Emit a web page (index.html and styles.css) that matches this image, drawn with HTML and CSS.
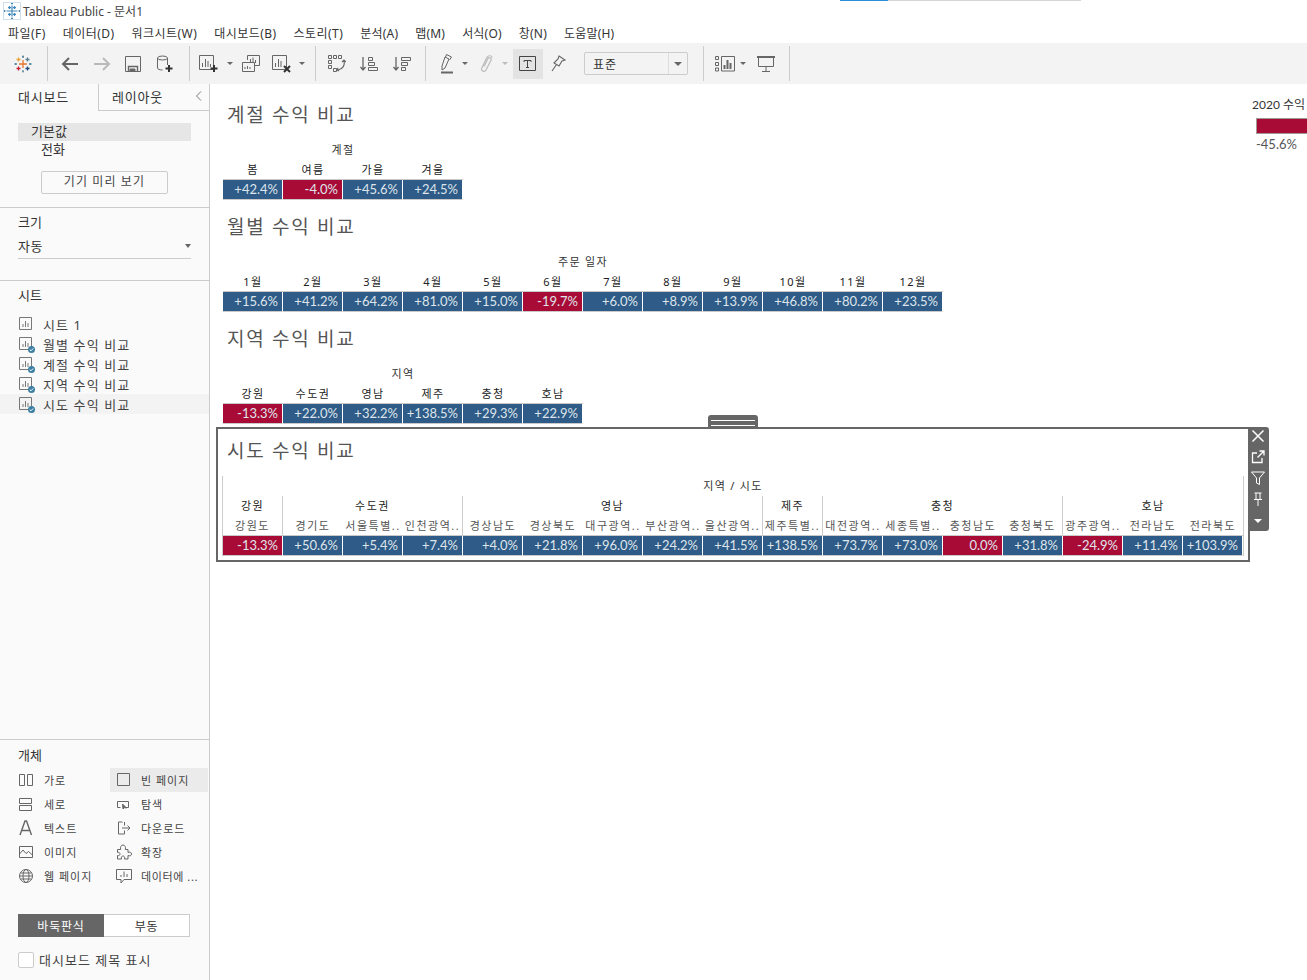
FILE: index.html
```html
<!DOCTYPE html>
<html lang="ko">
<head>
<meta charset="utf-8">
<title>Tableau Public - 문서1</title>
<link rel="stylesheet" href="styles.css">
</head>
<body>
<div class="tabs-edge"><span class="edge-blue"></span><span class="edge-gray"></span></div>
<header class="titlebar">
  <svg class="app-logo" width="18" height="18" viewBox="0 0 18 18" fill="none" stroke="#3f88b8" stroke-width="1.2"><path d="M9 3.5v11M3.5 9h11M5 5.6h3M6.5 4.1v3M10 5.6h3M11.5 4.1v3M5 12.4h3M6.5 10.9v3M10 12.4h3M11.5 10.9v3M9 .5v2M8 1.5h2M9 15.5v2M8 16.5h2M.5 9h2M1.5 8v2M15.5 9h2M16.5 8v2"/><rect x=".5" y=".5" width="17" height="17" stroke="#cfe0ec" stroke-width="1"/></svg>
  <span>Tableau Public - 문서1</span>
</header>
<nav class="menubar">
  <span>파일(F)</span><span>데이터(D)</span><span>워크시트(W)</span><span>대시보드(B)</span><span>스토리(T)</span><span>분석(A)</span><span>맵(M)</span><span>서식(O)</span><span>창(N)</span><span>도움말(H)</span>
</nav>
<div class="toolbar">
  <span class="tb-btn m8"><svg width="18" height="18" viewBox="0 0 18 18" fill="none" stroke-width="1.3"><path d="M9 5v8M5 9h8" stroke="#e8762d"/><path d="M4.5 2.5v4M2.5 4.5h4" stroke="#e8a33d"/><path d="M13.5 2.5v4M11.5 4.5h4" stroke="#5b7f95"/><path d="M4.5 11.5v4M2.5 13.5h4" stroke="#c72037"/><path d="M13.5 11.5v4M11.5 13.5h4" stroke="#1f447b"/><path d="M9 .5v2.4M8 1.7h2" stroke="#5b879b"/><path d="M9 15v2.5M8 16.3h2" stroke="#7099a6"/><path d="M.5 9h2.400M1.700 8v2" stroke="#59879b"/><path d="M15 9h2.500M16.300 8v2" stroke="#59879b"/></svg></span>
  <i class="tb-sep m9"></i>
  <span class="tb-btn m7"><svg width="18" height="16" viewBox="0 0 18 16" fill="none" stroke="#666" stroke-width="2"><path d="M17 8H2M8 2 2 8l6 6"/></svg></span>
  <span class="tb-btn m2"><svg width="18" height="16" viewBox="0 0 18 16" fill="none" stroke="#b9b9b9" stroke-width="2"><path d="M1 8h15M10 2l6 6-6 6"/></svg></span>
  <span class="tb-btn m1"><svg width="16" height="16" viewBox="0 0 16 16" fill="none" stroke="#666" stroke-width="1"><path d="M.5.500h15v15H.5z"/><path d="M3.500 15V10.500h9V15" stroke-width="1.400"/><path d="M5 13h5v2H5z" fill="#666"/></svg></span>
  <span class="tb-btn m2"><svg width="18" height="18" viewBox="0 0 18 18" fill="none" stroke="#666" stroke-width="1"><ellipse cx="6.500" cy="3" rx="5" ry="2"/><path d="M1.500 3v10c0 1.100 2 2 5 2M11.500 3v7"/><path d="M13 10v7M9.500 13.500h7" stroke="#333" stroke-width="2"/></svg></span>
  <i class="tb-sep m9"></i>
  <span class="tb-btn m4"><svg width="20" height="18" viewBox="0 0 20 18" fill="none" stroke="#666"><path d="M.5.500h14v14H.5zM3.500 12V8M6.500 12V4M9 12V6M11.500 12V9" /><path d="M15 10v7M11.500 13.500h7" stroke="#333" stroke-width="2"/></svg></span>
  <span class="tb-caret m2"></span>
  <span class="tb-btn m2"><svg width="18" height="18" viewBox="0 0 18 18" fill="none" stroke="#666"><path d="M5.500 5V.5h12v10h-5M8.500 8V4M11 8V2.500M13.500 8V5"/><path d="M.5 7.500h12v9H.5zM3 14v-2M5.500 14v-3M8 14v-2"/></svg></span>
  <span class="tb-btn m1"><svg width="20" height="18" viewBox="0 0 20 18" fill="none" stroke="#666"><path d="M.5.500h14v14H.5zM3.500 12V8M6.500 12V4M9 12V6"/><path d="m12 11 6 6M18 11l-6 6" stroke="#333" stroke-width="2"/></svg></span>
  <span class="tb-caret m1"></span>
  <i class="tb-sep m9"></i>
  <span class="tb-btn m6"><svg width="18" height="18" viewBox="0 0 18 18" fill="none" stroke="#666"><path d="M.5.500h3v3h-3zM5.500.500h3v3h-3zM10.500.500h3v3h-3zM.5 5.500h3v3h-3zM.5 10.500h3v3h-3zM5.500 13.500h3v3h-3z"/><path d="M16 6c1 4-1 8-6 9M14 7l2-2 2 2M10 13l-1 2 2 1" stroke-width="1.200"/></svg></span>
  <span class="tb-btn m2"><svg width="18" height="16" viewBox="0 0 18 16" fill="none" stroke="#666"><path d="M3 1v13M.5 11 3 14l2.500-3" stroke-width="1.300"/><path d="M8.500 1.500h4v3h-4zM8.500 6.500h6v3h-6zM8.500 11.500h9v3h-9z"/></svg></span>
  <span class="tb-btn m3"><svg width="18" height="16" viewBox="0 0 18 16" fill="none" stroke="#666"><path d="M3 1v13M.5 11 3 14l2.500-3" stroke-width="1.300"/><path d="M8.500 1.500h9v3h-9zM8.500 6.500h6v3h-6zM8.500 11.500h4v3h-4z"/></svg></span>
  <i class="tb-sep m8"></i>
  <span class="tb-btn m6"><svg width="14" height="20" viewBox="0 0 14 20" fill="none" stroke="#666"><path d="m5 3 4 2-4 9-3 2v-4zM5.500 3l1-2.500 5 2.500-2 3"/><path d="M1 18.500h12" stroke-width="2"/></svg></span>
  <span class="tb-caret n1"></span>
  <span class="tb-btn m2"><svg width="14" height="18" viewBox="0 0 14 18" fill="none" stroke="#bbb" stroke-width="1.200"><path d="M5 11.500 9 3.500c.8-1.600 3.800-.6 3.200 1.300L7 15c-1.300 2.500-5.500 1-4.300-1.700L8 2.300c1-2 4.500-2.200 5.300.2"/></svg></span>
  <span class="tb-caret light"></span>
  <span class="tb-btn m4 active"><svg width="18" height="16" viewBox="0 0 18 16" fill="none" stroke="#444"><path d="M.5.500h16v14H.5zM5 4.500h7M8.500 4.500v7M7 11.500h3M5 4.500V6M12 4.500V6"/></svg></span>
  <span class="tb-btn"><svg width="16" height="18" viewBox="0 0 16 18" fill="none" stroke="#666"><path d="m9 1 6 4-3 1-3 5-5-3 4-4zM6.500 9.500 2 16" stroke-width="1.100"/></svg></span>
  <div class="tb-select"><span class="tb-select-text">표준</span><span class="tb-select-arrow"></span></div>
  <i class="tb-sep m15"></i>
  <span class="tb-btn m6"><svg width="20" height="16" viewBox="0 0 20 16" fill="none" stroke="#666"><path d="M.5.500h3v3h-3zM.5 6.500h3v3h-3zM.5 12h3v3h-3zM6.500.500h13v14.500h-13z"/><path d="M9.500 13V9M12.500 13V4M15.500 13V7" stroke-width="2"/></svg></span>
  <span class="tb-caret n1"></span>
  <span class="tb-btn m4"><svg width="18" height="16" viewBox="0 0 18 16" fill="none" stroke="#666"><path d="M0 1h18" stroke-width="2"/><path d="M1.500 1v9.500h15V1M9 11v4M5 15.500h8"/></svg></span>
  <i class="tb-sep m8"></i>
</div>
<div class="workspace">
  <aside class="sidebar">
    <div class="tabs">
      <div class="tab tab-on">대시보드</div>
      <div class="tab tab-off"><span>레이아웃</span><svg width="8" height="10" viewBox="0 0 8 10" fill="none" stroke="#777"><path d="M6 .500 1.500 5 6 9.500"/></svg></div>
    </div>
    <section class="devices">
      <div class="device device-on">기본값</div>
      <div class="device device-sub">전화</div>
      <div class="preview-btn">기기 미리 보기</div>
    </section>
    <section class="size">
      <h3>크기</h3>
      <div class="size-select"><span>자동</span><span class="caret-small"></span></div>
    </section>
    <section class="sheets">
      <h3>시트</h3>
      <ul class="sheet-list">
        <li><svg class="sheet-icon" width="18" height="18" viewBox="0 0 18 18" fill="none" stroke="#777"><path d="M1.500 1.500h12v12h-12zM5 11V8M7.500 11V5M10 11V7"/></svg>시트 1</li>
        <li><svg class="sheet-icon" width="18" height="18" viewBox="0 0 18 18" fill="none" stroke="#777"><path d="M1.500 1.500h12v12h-12zM5 11V8M7.500 11V5M10 11V7"/><circle cx="13.500" cy="13.500" r="3.500" fill="#3d7fa3" stroke="none"/><path d="m11.700 13.500 1.300 1.300 2.200-2.300" stroke="#fff"/></svg>월별 수익 비교</li>
        <li><svg class="sheet-icon" width="18" height="18" viewBox="0 0 18 18" fill="none" stroke="#777"><path d="M1.500 1.500h12v12h-12zM5 11V8M7.500 11V5M10 11V7"/><circle cx="13.500" cy="13.500" r="3.500" fill="#3d7fa3" stroke="none"/><path d="m11.700 13.500 1.300 1.300 2.200-2.300" stroke="#fff"/></svg>계절 수익 비교</li>
        <li><svg class="sheet-icon" width="18" height="18" viewBox="0 0 18 18" fill="none" stroke="#777"><path d="M1.500 1.500h12v12h-12zM5 11V8M7.500 11V5M10 11V7"/><circle cx="13.500" cy="13.500" r="3.500" fill="#3d7fa3" stroke="none"/><path d="m11.700 13.500 1.300 1.300 2.200-2.300" stroke="#fff"/></svg>지역 수익 비교</li>
        <li class="sheet-on"><svg class="sheet-icon" width="18" height="18" viewBox="0 0 18 18" fill="none" stroke="#777"><path d="M1.500 1.500h12v12h-12zM5 11V8M7.500 11V5M10 11V7"/><circle cx="13.500" cy="13.500" r="3.500" fill="#3d7fa3" stroke="none"/><path d="m11.700 13.500 1.300 1.300 2.200-2.300" stroke="#fff"/></svg>시도 수익 비교</li>
      </ul>
    </section>
    <section class="objects">
      <h3>개체</h3>
      <div class="object-grid">
        <div class="object"><svg width="16" height="16" viewBox="0 0 16 16" fill="none" stroke="#666"><path d="M1.500 2.500h5v11h-5zM9.500 2.500h5v11h-5z"/></svg><span>가로</span></div>
        <div class="object object-on"><svg width="16" height="16" viewBox="0 0 16 16" fill="none" stroke="#666"><path d="M1.500 1.500h12v12h-12z"/></svg><span>빈 페이지</span></div>
        <div class="object"><svg width="16" height="16" viewBox="0 0 16 16" fill="none" stroke="#666"><path d="M1.500 2.500h12v5h-12zM1.500 9.500h12v5h-12z"/></svg><span>세로</span></div>
        <div class="object"><svg width="16" height="16" viewBox="0 0 16 16" fill="none" stroke="#666"><path d="M4.500 11.500h-3v-6h11v6h-3" /><path d="m6.500 8 .5 5 1.200-1.300 2.300.3z" fill="#666"/></svg><span>탐색</span></div>
        <div class="object"><svg width="16" height="16" viewBox="0 0 16 16" fill="none" stroke="#666" stroke-width="1.400"><path d="m2 15 5-14h1.500l5 14M4 10.500h7.500"/></svg><span>텍스트</span></div>
        <div class="object"><svg width="16" height="16" viewBox="0 0 16 16" fill="none" stroke="#666"><path d="M6.500 2H2.500v12h6v-3.500M8.500 2v3.500M6 8h8M11.500 5.500 14 8l-2.500 2.500"/></svg><span>다운로드</span></div>
        <div class="object"><svg width="16" height="16" viewBox="0 0 16 16" fill="none" stroke="#666"><path d="M1.500 2.500h13v11h-13z"/><path d="m1.500 10 3.500-4 3 3.500 2.500-2 4 3.500"/></svg><span>이미지</span></div>
        <div class="object"><svg width="16" height="16" viewBox="0 0 16 16" fill="none" stroke="#666"><path d="M1.500 5.500h3.200C4 3 5.200 1 7 1s3 2 2.300 4.500H12v3c1.500-.8 3.500-.3 3.500 1.500S13.500 12.300 12 11.500v3.500H8.500c.5-2-.2-3-1.500-3s-2 1-1.500 3h-4v-3.500c1.500.5 2.500-.3 2.500-1.500S3 8 1.500 8.500z"/></svg><span>확장</span></div>
        <div class="object"><svg width="16" height="16" viewBox="0 0 16 16" fill="none" stroke="#666"><circle cx="8" cy="8" r="6.500"/><ellipse cx="8" cy="8" rx="3" ry="6.500"/><path d="M1.500 8h13M2.500 5h11M2.500 11h11"/></svg><span>웹 페이지</span></div>
        <div class="object object-tight"><svg width="16" height="16" viewBox="0 0 16 16" fill="none" stroke="#666"><path d="M.5 1.500h15v10H8L5 15v-3.500H.5zM5 9V7M8 9V3.500M11 9V6"/></svg><span>데이터에 ...</span></div>
      </div>
      <div class="segmented"><span class="seg seg-on">바둑판식</span><span class="seg">부동</span></div>
      <label class="title-check"><span class="checkbox"></span><span>대시보드 제목 표시</span></label>
    </section>
  </aside>
  <main class="canvas">
    <section class="view">
      <h2>계절 수익 비교</h2>
      <div class="xtab cols-4">
        <div class="field">계절</div>
        <div class="hd">봄</div><div class="hd">여름</div><div class="hd">가을</div><div class="hd">겨울</div>
        <div class="cell">+42.4%</div><div class="cell neg">-4.0%</div><div class="cell">+45.6%</div><div class="cell">+24.5%</div>
      </div>
    </section>
    <section class="view">
      <h2>월별 수익 비교</h2>
      <div class="xtab cols-12">
        <div class="field">주문 일자</div>
        <div class="hd">1월</div><div class="hd">2월</div><div class="hd">3월</div><div class="hd">4월</div><div class="hd">5월</div><div class="hd">6월</div><div class="hd">7월</div><div class="hd">8월</div><div class="hd">9월</div><div class="hd">10월</div><div class="hd">11월</div><div class="hd">12월</div>
        <div class="cell">+15.6%</div><div class="cell">+41.2%</div><div class="cell">+64.2%</div><div class="cell">+81.0%</div><div class="cell">+15.0%</div><div class="cell neg">-19.7%</div><div class="cell">+6.0%</div><div class="cell">+8.9%</div><div class="cell">+13.9%</div><div class="cell">+46.8%</div><div class="cell">+80.2%</div><div class="cell">+23.5%</div>
      </div>
    </section>
    <section class="view">
      <h2>지역 수익 비교</h2>
      <div class="xtab cols-6">
        <div class="field">지역</div>
        <div class="hd">강원</div><div class="hd">수도권</div><div class="hd">영남</div><div class="hd">제주</div><div class="hd">충청</div><div class="hd">호남</div>
        <div class="cell neg">-13.3%</div><div class="cell">+22.0%</div><div class="cell">+32.2%</div><div class="cell">+138.5%</div><div class="cell">+29.3%</div><div class="cell">+22.9%</div>
      </div>
    </section>
    <section class="view view-selected">
      <div class="drag-handle"></div>
      <div class="float-tools">
        <svg width="14" height="14" viewBox="0 0 14 14" fill="none" stroke="#fff" stroke-width="1.500"><path d="m1.500 1.500 11 11M12.500 1.500l-11 11"/></svg>
        <svg width="14" height="14" viewBox="0 0 14 14" fill="none" stroke="#fff" stroke-width="1.300"><path d="M6 3H1.500v9.500H11V8M6.500 7.500 12.500 1.500M8.500 1h4.500v4.500"/></svg>
        <svg width="14" height="14" viewBox="0 0 14 14" fill="none" stroke="#fff"><path d="M.5 1h13L8.500 7v6.500l-3-1.500V7z"/></svg>
        <svg width="14" height="14" viewBox="0 0 14 14" fill="none" stroke="#fff"><path d="M3.500 1h7M5 1v6M9 1v6M3 7.500h8M7 7.500V14"/></svg>
        <span class="float-caret"></span>
      </div>
      <h2>시도 수익 비교</h2>
      <div class="xtab cols-17 framed">
        <div class="field">지역 / 시도</div>
        <div class="hd gp s1">강원</div><div class="hd gp s3">수도권</div><div class="hd gp s5">영남</div><div class="hd gp s1">제주</div><div class="hd gp s4">충청</div><div class="hd gp gp-end s3">호남</div>
        <div class="sub b">강원도</div><div class="sub">경기도</div><div class="sub">서울특별..</div><div class="sub b">인천광역..</div><div class="sub">경상남도</div><div class="sub">경상북도</div><div class="sub">대구광역..</div><div class="sub">부산광역..</div><div class="sub b">울산광역..</div><div class="sub b">제주특별..</div><div class="sub">대전광역..</div><div class="sub">세종특별..</div><div class="sub">충청남도</div><div class="sub b">충청북도</div><div class="sub">광주광역..</div><div class="sub">전라남도</div><div class="sub">전라북도</div>
        <div class="cell neg">-13.3%</div><div class="cell">+50.6%</div><div class="cell">+5.4%</div><div class="cell">+7.4%</div><div class="cell">+4.0%</div><div class="cell">+21.8%</div><div class="cell">+96.0%</div><div class="cell">+24.2%</div><div class="cell">+41.5%</div><div class="cell">+138.5%</div><div class="cell">+73.7%</div><div class="cell">+73.0%</div><div class="cell neg">0.0%</div><div class="cell">+31.8%</div><div class="cell neg">-24.9%</div><div class="cell">+11.4%</div><div class="cell">+103.9%</div>
      </div>
    </section>
    <div class="legend">
      <div class="legend-title">2020 수익</div>
      <div class="legend-bar"></div>
      <div class="legend-value">-45.6%</div>
    </div>
  </main>
</div>
</body>
</html>
```
FILE: styles.css
```css
* { box-sizing: border-box; }
html, body { margin: 0; height: 980px; overflow: hidden; }
body {
  position: relative;
  background: #fff;
  color: #333;
  font-family: "Noto Sans", "Noto Sans CJK KR", sans-serif;
  font-size: 12px;
}
h2, h3, ul { margin: 0; padding: 0; font-weight: 400; }
ul { list-style: none; }

.tabs-edge { position: absolute; top: 0; left: 840px; display: flex; height: 1px; }
.edge-blue { width: 48px; background: #2a8fd8; }
.edge-gray { width: 193px; background: #d5d5d5; }

.titlebar { height: 22px; display: flex; align-items: center; gap: 2px; padding: 0 0 0 3px; font-size: 12px; color: #444; }
.menubar { height: 21px; display: flex; align-items: center; padding-left: 8px; gap: 17px; color: #333; font-size: 12px; letter-spacing: .45px; }
.menubar span:nth-child(n+6) { letter-spacing: .2px; }

.toolbar { height: 41px; background: #f3f3f3; display: flex; align-items: center; padding-top: 0; }
.tb-btn { width: 30px; height: 30px; display: flex; align-items: center; justify-content: center; flex: none; }
.tb-btn.active { background: #e3e3e3; }
.tb-sep { width: 1px; height: 35px; background: #ccc; flex: none; }
.tb-caret { width: 8px; height: 30px; flex: none; display: flex; align-items: center; justify-content: center; }
.tb-caret::after { content: ""; border: 3px solid transparent; border-top: 3px solid #666; border-bottom: 0; }
.tb-caret.light::after { border-top-color: #bbb; }
.n1 { margin-left: -1px; }
.m1 { margin-left: 1px; } .m2 { margin-left: 2px; } .m3 { margin-left: 3px; } .m4 { margin-left: 4px; }
.m6 { margin-left: 6px; } .m7 { margin-left: 7px; } .m8 { margin-left: 8px; } .m9 { margin-left: 9px; } .m15 { margin-left: 15px; }
.tb-select { margin-left: 11px; width: 104px; height: 23px; border: 1px solid #ccc; border-radius: 2px; display: flex; align-items: center; justify-content: space-between; font-size: 12px; letter-spacing: 1px; }
.tb-select-text { padding-left: 8px; }
.tb-select-arrow { width: 19px; height: 21px; border-left: 1px solid #ddd; display: flex; align-items: center; justify-content: center; }
.tb-select-arrow::after { content: ""; border: 4px solid transparent; border-top: 4px solid #666; border-bottom: 0; }

.workspace { display: flex; height: 896px; }
.sidebar { width: 210px; flex: none; background: #fafafa; border-right: 1px solid #ccc; display: flex; flex-direction: column; font-size: 13px; }
.tabs { display: flex; height: 27px; flex: none; }
.tab { height: 27px; display: flex; align-items: center; letter-spacing: .8px; }
.tab-on { width: 98px; padding-left: 18px; padding-bottom: 2px; }
.tab-off { flex: 1; border-left: 1px solid #ccc; border-bottom: 1px solid #ccc; padding: 0 6px 2px 13px; justify-content: space-between; }

.devices { height: 97px; flex: none; border-bottom: 1px solid #ccc; padding: 12px 18px 0; }
.device { height: 18px; line-height: 16px; padding-left: 13px; }
.device-on { background: #e6e6e6; }
.device-sub { padding-left: 23px; }
.preview-btn { margin: 12px 0 0 23px; width: 127px; height: 23px; border: 1px solid #ccc; border-radius: 2px; text-align: center; line-height: 20px; font-size: 12px; letter-spacing: 1.1px; color: #444; }

.size { height: 73px; flex: none; border-bottom: 1px solid #ccc; padding: 5px 18px 0; }
.size h3, .sheets h3, .objects h3 { font-size: 13px; height: 18px; line-height: 18px; }
.size-select { margin-top: 5px; height: 23px; border-bottom: 1px solid #ccc; display: flex; justify-content: space-between; align-items: center; padding-right: 0; padding-bottom: 3px; letter-spacing: .6px; }
.caret-small { border: 3.500px solid transparent; border-top: 4px solid #666; border-bottom: 0; }

.sheets { height: 459px; flex: none; border-bottom: 1px solid #ccc; padding-top: 5px; }
.sheets h3 { padding-left: 18px; }
.sheet-list { margin-top: 10px; }
.sheet-list li { height: 20px; display: flex; align-items: center; padding-left: 18px; letter-spacing: 1.1px; color: #444; }
.sheet-icon { margin-right: 7px; margin-top: 2px; flex: none; }
.sheet-on { background: #f3f3f3; }

.objects { flex: 1; padding-top: 6px; }
.objects h3 { padding-left: 18px; }
.object-grid { display: grid; grid-template-columns: 92px 98px; grid-auto-rows: 24px; margin: 4px 0 0 18px; }
.object { display: flex; align-items: center; gap: 9px; font-size: 11px; letter-spacing: 1px; color: #444; }
.object-on { background: #ebebeb; margin-left: 0; padding-left: 6px; }
.object:nth-child(even):not(.object-on) { padding-left: 6px; }
.object:nth-child(odd) { gap: 10px; }
.object-tight { letter-spacing: .6px; }
.segmented { display: flex; margin: 26px 0 0 18px; width: 172px; height: 23px; font-size: 12px; letter-spacing: .8px; }
.seg { flex: 1; display: flex; align-items: center; justify-content: center; border: 1px solid #ccc; border-left: 0; background: #fff; }
.seg-on { width: 86px; flex: none; background: #666; border: 0; color: #fff; }
.title-check { display: flex; align-items: center; gap: 5px; margin: 13px 0 0 18px; letter-spacing: 1px; color: #444; }
.checkbox { width: 16px; height: 16px; border: 1px solid #ccc; border-radius: 2px; background: #fff; }

.canvas { flex: 1; position: relative; padding-top: 7px; }
.view { height: 112px; padding-left: 13px; }
.view h2 { height: 49px; padding: 4px 0 0 4px; font-size: 19px; line-height: 40px; letter-spacing: 1.7px; color: #555; }
.xtab { display: grid; grid-auto-rows: 20px; width: max-content; }
.cols-4 { grid-template-columns: repeat(4, 60px); }
.cols-6 { grid-template-columns: repeat(6, 60px); }
.cols-12 { grid-template-columns: repeat(12, 60px); }
.cols-17 { grid-template-columns: repeat(17, 60px); }
.field { grid-column: 1 / -1; text-align: center; font-size: 11px; line-height: 20px; color: #333; letter-spacing: 1.300px; }
.hd { text-align: center; font-size: 11px; line-height: 20px; color: #222; letter-spacing: 1.5px; border-bottom: 1px solid #c9c9c9; }
.cell { height: 20px; border-bottom: 1px solid #c9c9c9; border-right: 1px solid #fff; background: #2e5b87; background-clip: padding-box; color: #dfe5eb; text-align: right; padding-right: 4px; font-family: Lato, "Noto Sans", sans-serif; font-size: 13px; line-height: 19px; white-space: nowrap; }
.neg { background-color: #a90b37; }

.view-selected { position: absolute; left: 6px; top: 343px; width: 1034px; height: 135px; border: 2px solid #666; padding-left: 5px; }
.view-selected h2 { height: 47px; padding-top: 2px; padding-left: 4px; }
.framed { border-left: 1px solid #ccc; border-right: 1px solid #ccc; margin-left: -1px; }
.gp { border-bottom: 0; border-right: 1px solid #ccc; }
.gp-end { border-right: 0; }
.s1 { grid-column: span 1; } .s3 { grid-column: span 3; } .s4 { grid-column: span 4; } .s5 { grid-column: span 5; }
.sub { text-align: center; font-size: 11px; line-height: 20px; color: #555; letter-spacing: 1.5px; border-bottom: 1px solid #c9c9c9; white-space: nowrap; overflow: hidden; }
.sub.b { border-right: 1px solid #ccc; }

.drag-handle { position: absolute; top: -14px; left: 490px; width: 50px; height: 12px; background: #666; border-radius: 3px 3px 0 0; }
.drag-handle::after { content: ""; position: absolute; left: 3px; right: 3px; top: 5px; height: 4px; border-top: 1px solid #fff; border-bottom: 1px solid #fff; }
.float-tools { position: absolute; top: -2px; left: 1032px; width: 19px; height: 104px; background: #666; border-radius: 0 3px 3px 0; display: flex; flex-direction: column; align-items: center; gap: 7px; padding: 2px 3px 0 0; }
.float-caret { margin-top: 6px; border: 4px solid transparent; border-top: 4px solid #fff; border-bottom: 0; }

.legend { position: absolute; top: 12px; left: 1042px; width: 55px; }
.legend-title { height: 18px; line-height: 18px; font-size: 12px; white-space: nowrap; font-family: Lato, "Noto Sans CJK KR", sans-serif; }
.legend-bar { margin: 4px 0 0 4px; width: 51px; height: 16px; background: #a90b37; border: 1px solid #a09a94; border-right: 0; }
.legend-value { margin: 1px 0 0 4px; font-family: Lato, sans-serif; font-size: 13px; color: #555; line-height: 18px; }
```
